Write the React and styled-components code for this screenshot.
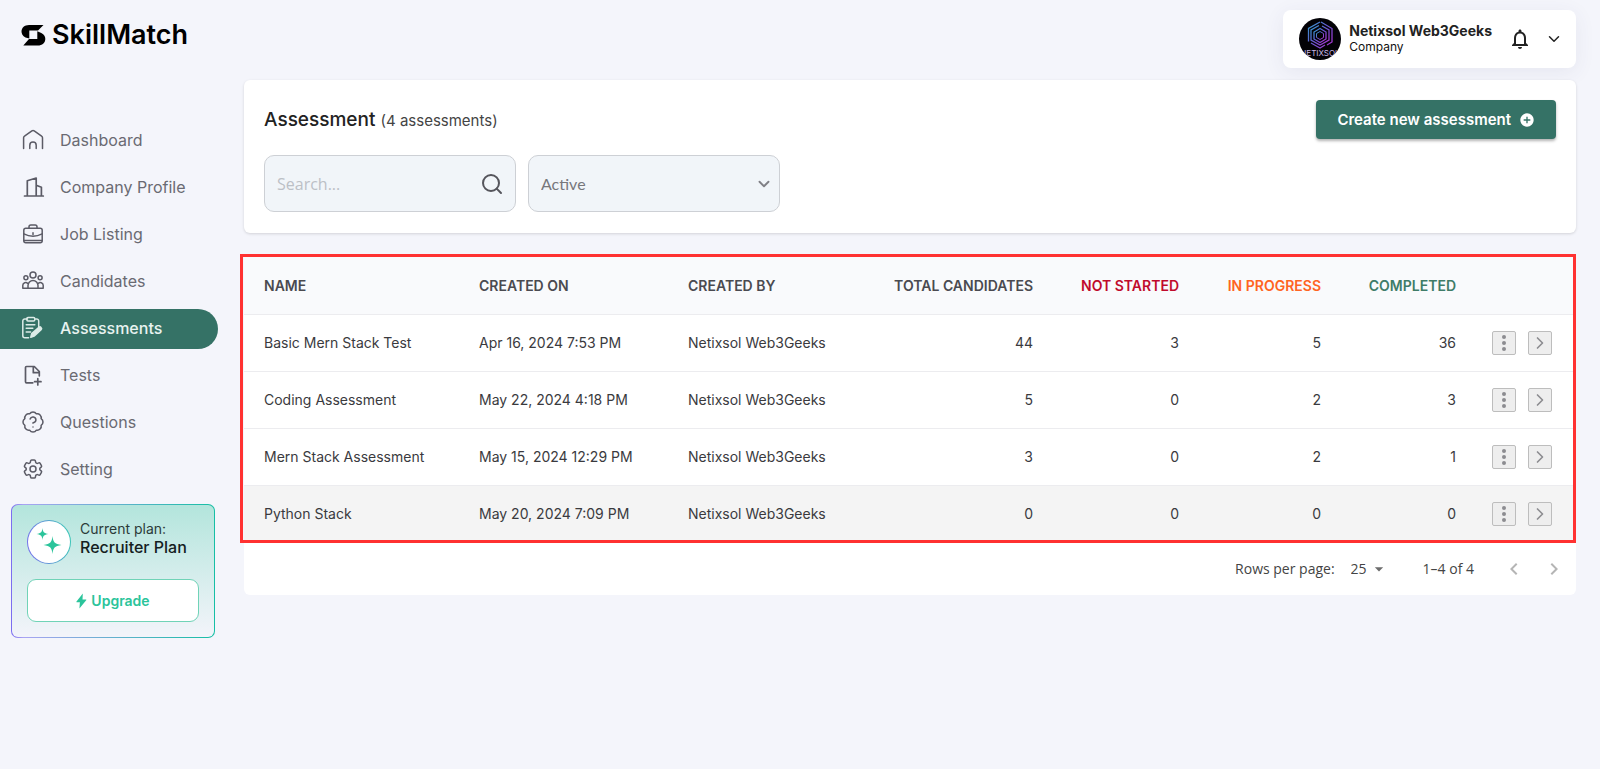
import React from "react";
import styled, { createGlobalStyle, css } from "styled-components";
import { BadgeQuestionMark, Search, ChevronDown, ChevronRight } from "lucide-react";
import { MdAddCircle, MdNotificationsNone, MdArrowDropDown, MdChevronLeft, MdChevronRight } from "react-icons/md";
import { HiOutlineCog6Tooth } from "react-icons/hi2";

const GlobalStyle = createGlobalStyle`
  *, *::before, *::after { box-sizing: border-box; }
  body {
    margin: 0;
    background: #f4f5fb;
    color: #222;
    font-family: Inter, "Liberation Sans", sans-serif;
    font-size: 14px;
  }
  button, input, select { font: inherit; color: inherit; margin: 0; }
`;

const green = "#357266";
const mint = "#2bc49b";

const Shell = styled.div`
  display: grid;
  grid-template-columns: 244px minmax(0, 1fr);
  min-height: 100vh;
`;

const Sidebar = styled.aside`
  padding-top: 22px;
`;

const Brand = styled.a`
  display: flex;
  align-items: center;
  gap: 6px;
  height: 26px;
  margin: 0 0 73px 21px;
  color: #000;
  font-size: 27px;
  line-height: 26px;
  font-weight: 600;
  text-decoration: none;
`;

const Nav = styled.nav`
  display: flex;
  flex-direction: column;
  gap: 7px;
  padding-right: 26px;
`;

const NavLink = styled.a`
  display: flex;
  align-items: center;
  gap: 15px;
  height: 40px;
  padding: 0 0 2px 21px;
  border-radius: 0 20px 20px 0;
  color: #6a6a72;
  font-size: 16px;
  text-decoration: none;
  svg { width: 24px; height: 24px; flex: none; color: #5b5b66; }
  ${(p) =>
    p.$active &&
    css`
      background: ${green};
      color: #e8f3f0;
      font-weight: 500;
      svg { color: #dcebe7; }
    `}
`;

const PlanCard = styled.section`
  margin: 14px 29px 0 11px;
  padding: 15px;
  border: 1px solid transparent;
  border-radius: 7px;
  background:
    linear-gradient(180deg, #b3e5dc, #f3f4fa) padding-box,
    linear-gradient(90deg, #7a6cf0, #a9a4f2 6%, #16bfa5) border-box;
`;

const PlanInfo = styled.div`
  display: flex;
  align-items: center;
  gap: 9px;
  margin-bottom: 15px;
`;

const PlanBadge = styled.span`
  display: grid;
  place-items: center;
  width: 44px;
  height: 44px;
  border: 1px solid transparent;
  border-radius: 50%;
  background:
    linear-gradient(#fff, #fff) padding-box,
    linear-gradient(80deg, #7a6cf0, #38cdb4) border-box;
`;

const PlanText = styled.p`
  margin: 0 0 8px;
  color: #2c3b39;
  font-size: 14px;
  line-height: 18px;
  strong {
    display: block;
    color: #14201e;
    font-size: 16px;
    font-weight: 500;
  }
`;

const UpgradeButton = styled.button`
  display: flex;
  align-items: center;
  justify-content: center;
  gap: 4px;
  width: 100%;
  height: 43px;
  border: 1px solid #70d3b7;
  border-radius: 9px;
  background: #fff;
  color: ${mint};
  font-size: 14px;
  font-weight: 600;
`;

const Main = styled.main`
  padding: 10px 24px 24px 0;
`;

const AccountBar = styled.header`
  display: flex;
  align-items: center;
  width: fit-content;
  height: 58px;
  margin: 0 0 12px auto;
  padding: 0 13px 0 16px;
  border-radius: 8px;
  background: #fff;
  box-shadow: 0 4px 20px rgba(60, 60, 110, 0.08);
`;

const AccountName = styled.div`
  margin: 0 16px 0 8px;
  color: #111;
  font-size: 12px;
  line-height: 16px;
  strong {
    display: block;
    color: #222;
    font-size: 14px;
    font-weight: 700;
  }
`;

const GhostButton = styled.button`
  display: grid;
  place-items: center;
  padding: 0;
  border: 0;
  background: none;
`;

const AccountActions = styled.div`
  display: flex;
  align-items: center;
  gap: 13px;
`;

const Panel = styled.section`
  padding: 20px 20px 21px;
  border-radius: 6px;
  background: #fff;
  box-shadow: 0 1px 3px rgba(0, 0, 0, 0.14);
`;

const PanelHead = styled.div`
  display: flex;
  align-items: center;
  justify-content: space-between;
  margin-bottom: 16px;
`;

const Title = styled.h1`
  margin: 0;
  color: #222;
  font-size: 19px;
  font-weight: 500;
  small { color: #444; font-size: 15px; font-weight: 400; }
`;

const CreateButton = styled.button`
  display: flex;
  align-items: center;
  gap: 8px;
  height: 39px;
  padding: 0 21px;
  border: 0;
  border-radius: 4px;
  background: ${green};
  color: #fff;
  font-size: 15px;
  font-weight: 600;
  box-shadow: 0 2px 3px rgba(0, 0, 0, 0.3);
`;

const Filters = styled.div`
  display: flex;
  gap: 12px;
`;

const Field = styled.label`
  display: grid;
  grid-template-columns: minmax(0, 1fr) auto;
  align-items: center;
  width: 252px;
  height: 57px;
  border: 1px solid #cdd0d5;
  border-radius: 10px;
  background: #f1f5f9;
  > * { grid-row: 1; }
  svg { grid-column: 2; pointer-events: none; }
`;

const fieldControl = css`
  width: 100%;
  height: 100%;
  padding: 0 12px;
  border: 0;
  outline: 0;
  background: transparent;
  font-size: 16px;
`;

const SearchInput = styled.input`
  ${fieldControl}
  font-family: "Open Sans", "Noto Sans", sans-serif;
  &::placeholder { color: #bcc0c6; opacity: 1; }
`;

const StatusSelect = styled.select`
  ${fieldControl}
  grid-column: 1 / 3;
  appearance: none;
  color: #77777c;
  font-family: Lato, sans-serif;
`;

const SearchGlyph = styled(Search)`
  margin-right: 11px;
  color: #55555c;
`;

const SelectGlyph = styled(ChevronDown)`
  margin-right: 6px;
  color: #808086;
`;

const TablePanel = styled.section`
  margin-top: 24px;
  border-radius: 6px;
  background: #fff;
`;

const TableFrame = styled.div`
  position: relative;
  &::after {
    content: "";
    position: absolute;
    inset: -3px 0 0 -4px;
    border: 3px solid #ff3131;
    pointer-events: none;
  }
`;

const Table = styled.table`
  width: 100%;
  border-collapse: collapse;
  table-layout: fixed;
`;

const Col = styled.col`
  width: ${(p) => p.$width};
`;

const Row = styled.tr`
  height: 57px;
  border-bottom: 1px solid #ececef;
  background: ${(p) => (p.$shaded ? "#f4f4f4" : "#fff")};
`;

const HeadRow = styled(Row)`
  background: #f9fafc;
`;

const Cell = styled.td`
  padding: 0 20px;
  color: #3a3a3e;
  font-size: 14px;
  text-align: ${(p) => (p.$numeric ? "right" : "left")};
  white-space: nowrap;
`;

const HeadCell = styled(Cell)`
  color: ${(p) => p.$color || "#4a4a50"};
  font-weight: 600;
`;

const RowActions = styled.div`
  display: flex;
  justify-content: flex-end;
  gap: 12px;
  margin-right: 4px;
`;

const IconButton = styled.button`
  display: grid;
  place-items: center;
  width: 24px;
  height: 24px;
  padding: 0;
  border: 1px solid #bdbdbd;
  border-radius: 2px;
  background: #eee;
  color: #8c8c90;
`;

const ActionCell = styled(Cell)`
  padding: 0 20px 0 0;
`;

const Pagination = styled.footer`
  display: flex;
  align-items: center;
  justify-content: flex-end;
  height: 52px;
  padding-right: 10px;
  color: #444;
  font-family: "Open Sans", "Noto Sans", sans-serif;
  font-size: 14px;
`;

const PageSize = styled.label`
  display: flex;
  align-items: center;
  gap: 16px;
  margin-right: 34px;
`;

const SizePicker = styled.span`
  display: grid;
  grid-template-columns: 18px 20px;
  align-items: center;
  > * { grid-row: 1; }
  svg { grid-column: 2; pointer-events: none; color: #6c6c6c; }
`;

const SizeSelect = styled.select`
  grid-column: 1 / 3;
  width: 100%;
  padding: 0;
  border: 0;
  background: none;
  appearance: none;
`;

const Pager = styled.div`
  display: flex;
  gap: 16px;
  margin-left: 28px;
`;

const Line = ({ children, width = 1.5, ...rest }) => (
  <svg
    viewBox="0 0 24 24"
    fill="none"
    stroke="currentColor"
    strokeWidth={width}
    strokeLinecap="round"
    strokeLinejoin="round"
    aria-hidden="true"
    {...rest}
  >
    {children}
  </svg>
);

const HomeIcon = () => (
  <Line>
    <path d="M2.6 20.5V9.7a2 2 0 0 1 .9-1.6l7.4-5.3a2 2 0 0 1 2.3 0l7.4 5.3a2 2 0 0 1 .9 1.6v10.8" />
    <path d="M8.8 20.5v-3.3a3.2 3.2 0 0 1 6.4 0v3.3" />
  </Line>
);

const BuildingIcon = () => (
  <Line width={1.7}>
    <path d="M3.5 21h18.8M6.3 21V5.8L15.2 3v18M15.2 10.3l5.2 2V21" />
  </Line>
);

const BriefcaseIcon = () => (
  <Line>
    <rect x="2.8" y="6.3" width="18.4" height="14.4" rx="2" />
    <path d="M8 6.3V4.8A1.8 1.8 0 0 1 9.8 3h4.4A1.8 1.8 0 0 1 16 4.8v1.5M2.8 11.8c5.8 3 12.6 3 18.4 0M12 10.8v1.6M3 18.6h18" />
  </Line>
);

const PeopleIcon = () => (
  <Line>
    <circle cx="12" cy="6" r="3" />
    <circle cx="4.9" cy="8.8" r="2" />
    <circle cx="19.1" cy="8.8" r="2" />
    <path d="M7 19.3v-2.8a5 5 0 0 1 10 0v2.8zM7 19.3H1.8v-3a2.8 2.8 0 0 1 5-1.7M17 19.3h5.2v-3a2.8 2.8 0 0 0-5-1.7" />
  </Line>
);

const ClipboardIcon = () => (
  <Line>
    <path d="M6.5 3H3.8A2 2 0 0 0 1.8 5v14.8a2 2 0 0 0 2 2h3.800M14.500 3h1.200a2 2 0 0 1 2 2v5.500" />
    <rect x="5.8" y="1.5" width="8" height="3.4" rx="1.2" />
    <path d="M5.2 8.7h8.6M5.2 12.3h6.6M5.2 16h4.4" />
    <path d="m9.8 21.3.9-3.7 7.2-6.3a1.500 1.500 0 0 1 2.100.2l.2.2a1.500 1.500 0 0 1-.1 2.100l-7 6.300z" fill="currentColor" />
  </Line>
);

const FilePlusIcon = () => (
  <Line width={1.7}>
    <path d="M11.8 19.8H5.5a1 1 0 0 1-1-1V4.5a1 1 0 0 1 1-1h7.8l5 5v4.3M12.3 3.7v6h6M16.8 15.5v6.4M13.6 18.7H20" />
  </Line>
);

const BoltIcon = () => (
  <svg width="11" height="16" viewBox="0 0 11 16" fill="currentColor" aria-hidden="true">
    <path d="M6.800.5.500 8.400c-.3.400-.1.900.4.900h3l-.5 6.200 6.800-8.200c.3-.4.1-.9-.4-.9H6.500L6.800.500Z" />
  </svg>
);

const LogoMark = () => (
  <svg width="25" height="21" viewBox="0 0 25 21" aria-hidden="true">
    <path d="M8 0h14.500L17 5.500H8.300v8L4.500 12.400C1.500 11 .5 8.600.5 6.500.5 2.800 3.600 0 8 0Z" />
    <path d="M16.800 20.500H2.300L8 14h8.300V6.300l4 1.700c3 1.400 4 3.700 4 5.900 0 3.800-3.100 6.600-7.500 6.600Z" />
  </svg>
);

const Sparkles = () => (
  <svg width="26" height="28" viewBox="0 0 26 28" fill={mint} aria-hidden="true">
    <path d="M6.500 0c.5 4.200 1.200 5 6 6-4.800 1-5.500 1.800-6 6-.5-4.200-1.200-5-6-6 4.800-1 5.500-1.800 6-6Z" />
    <path d="M16.500 8c.8 6.400 1.900 7.700 9 9-7.100 1.300-8.200 2.600-9 9-.8-6.400-1.900-7.700-9-9 7.100-1.300 8.200-2.600 9-9Z" />
  </svg>
);

const Avatar = () => (
  <svg width="42" height="42" viewBox="0 0 42 42" role="img" aria-label="Netixsol">
    <defs>
      <linearGradient id="hex" x1="0" y1="0" x2="1" y2="1">
        <stop offset="0" stopColor="#2f9fd0" />
        <stop offset=".5" stopColor="#6a55cf" />
        <stop offset="1" stopColor="#b12fd0" />
      </linearGradient>
      <clipPath id="disc"><circle cx="21" cy="21" r="21" /></clipPath>
    </defs>
    <g clipPath="url(#disc)">
      <rect width="42" height="42" fill="#030206" />
      <g fill="none" stroke="url(#hex)" strokeWidth="1.3">
        <path d="M21 4 9.500 10.500v13M22 4l11 6.500v13.500L28 27M12 25l9 5 5-3" />
        <path d="M20 7.500 12 12v10l9 5 9-5V12l-7-4" />
        <path d="m21 10.500-6 3.500v7l6 3.500 6-3.500v-7z" />
        <path d="m21 13.500-3.500 2v4l3.500 2 3.500-2v-4z" strokeWidth="1" />
      </g>
      <text x="21" y="38" fill="#c9b8e4" fontFamily="Inter, sans-serif" fontSize="8" textAnchor="middle">NETIXSOL</text>
    </g>
  </svg>
);

const DotsIcon = () => (
  <svg width="6" height="18" viewBox="0 0 6 18" fill="currentColor" aria-hidden="true">
    <circle cx="3" cy="3" r="2" />
    <circle cx="3" cy="9" r="2" />
    <circle cx="3" cy="15" r="2" />
  </svg>
);

const navItems = [
  { label: "Dashboard", icon: <HomeIcon /> },
  { label: "Company Profile", icon: <BuildingIcon /> },
  { label: "Job Listing", icon: <BriefcaseIcon /> },
  { label: "Candidates", icon: <PeopleIcon /> },
  { label: "Assessments", icon: <ClipboardIcon />, active: true },
  { label: "Tests", icon: <FilePlusIcon /> },
  { label: "Questions", icon: <BadgeQuestionMark strokeWidth={1.5} /> },
  { label: "Setting", icon: <HiOutlineCog6Tooth /> },
];

const columns = [
  { label: "NAME", width: "215px" },
  { label: "CREATED ON", width: "209px" },
  { label: "CREATED BY", width: "auto" },
  { label: "TOTAL CANDIDATES", width: "181px", numeric: true },
  { label: "NOT STARTED", width: "146px", numeric: true, color: "#c00a2c" },
  { label: "IN PROGRESS", width: "142px", numeric: true, color: "#ff6422" },
  { label: "COMPLETED", width: "135px", numeric: true, color: "#3f7c68" },
];

const rows = [
  ["Basic Mern Stack Test", "Apr 16, 2024 7:53 PM", "Netixsol Web3Geeks", 44, 3, 5, 36],
  ["Coding Assessment", "May 22, 2024 4:18 PM", "Netixsol Web3Geeks", 5, 0, 2, 3],
  ["Mern Stack Assessment", "May 15, 2024 12:29 PM", "Netixsol Web3Geeks", 3, 0, 2, 1],
  ["Python Stack", "May 20, 2024 7:09 PM", "Netixsol Web3Geeks", 0, 0, 0, 0],
];

export default function App() {
  return (
    <>
      <GlobalStyle />
      <Shell>
        <Sidebar>
          <Brand href="#">
            <LogoMark />
            SkillMatch
          </Brand>
          <Nav>
            {navItems.map((item) => (
              <NavLink key={item.label} href="#" $active={item.active} aria-current={item.active ? "page" : undefined}>
                {item.icon}
                {item.label}
              </NavLink>
            ))}
          </Nav>
          <PlanCard>
            <PlanInfo>
              <PlanBadge><Sparkles /></PlanBadge>
              <PlanText>
                Current plan:
                <strong>Recruiter Plan</strong>
              </PlanText>
            </PlanInfo>
            <UpgradeButton type="button">
              <BoltIcon />
              Upgrade
            </UpgradeButton>
          </PlanCard>
        </Sidebar>

        <Main>
          <AccountBar>
            <Avatar />
            <AccountName>
              <strong>Netixsol Web3Geeks</strong>
              Company
            </AccountName>
            <AccountActions>
              <GhostButton type="button" aria-label="Notifications"><MdNotificationsNone size={24} /></GhostButton>
              <GhostButton type="button" aria-label="Account menu"><ChevronDown size={18} /></GhostButton>
            </AccountActions>
          </AccountBar>

          <Panel>
            <PanelHead>
              <Title>Assessment <small>(4 assessments)</small></Title>
              <CreateButton type="button">
                Create new assessment
                <MdAddCircle size={16} />
              </CreateButton>
            </PanelHead>
            <Filters>
              <Field>
                <SearchInput type="search" placeholder="Search..." aria-label="Search assessments" />
                <SearchGlyph size={24} strokeWidth={2} />
              </Field>
              <Field>
                <StatusSelect aria-label="Status" defaultValue="Active">
                  <option>Active</option>
                  <option>Archived</option>
                </StatusSelect>
                <SelectGlyph size={18} strokeWidth={2.5} />
              </Field>
            </Filters>
          </Panel>

          <TablePanel>
            <TableFrame>
              <Table>
                <colgroup>
                  {columns.map((c) => <Col key={c.label} $width={c.width} />)}
                  <Col $width="100px" />
                </colgroup>
                <thead>
                  <HeadRow>
                    {columns.map((c) => (
                      <HeadCell as="th" scope="col" key={c.label} $numeric={c.numeric} $color={c.color}>{c.label}</HeadCell>
                    ))}
                    <ActionCell />
                  </HeadRow>
                </thead>
                <tbody>
                  {rows.map((row, r) => (
                    <Row key={row[0]} $shaded={r === rows.length - 1}>
                      {row.map((value, i) => (
                        <Cell key={columns[i].label} $numeric={columns[i].numeric}>{value}</Cell>
                      ))}
                      <ActionCell>
                        <RowActions>
                          <IconButton type="button" aria-label="More options"><DotsIcon /></IconButton>
                          <IconButton type="button" aria-label="Open"><ChevronRight size={20} strokeWidth={2} /></IconButton>
                        </RowActions>
                      </ActionCell>
                    </Row>
                  ))}
                </tbody>
              </Table>
            </TableFrame>
            <Pagination>
              <PageSize>
                Rows per page:
                <SizePicker>
                  <SizeSelect defaultValue="25">
                    <option>10</option>
                    <option>25</option>
                    <option>50</option>
                  </SizeSelect>
                  <MdArrowDropDown size={20} />
                </SizePicker>
              </PageSize>
              <span>1–4 of 4</span>
              <Pager>
                <GhostButton type="button" aria-label="Previous page" disabled><MdChevronLeft size={24} color="#b5b5b5" /></GhostButton>
                <GhostButton type="button" aria-label="Next page" disabled><MdChevronRight size={24} color="#b5b5b5" /></GhostButton>
              </Pager>
            </Pagination>
          </TablePanel>
        </Main>
      </Shell>
    </>
  );
}
